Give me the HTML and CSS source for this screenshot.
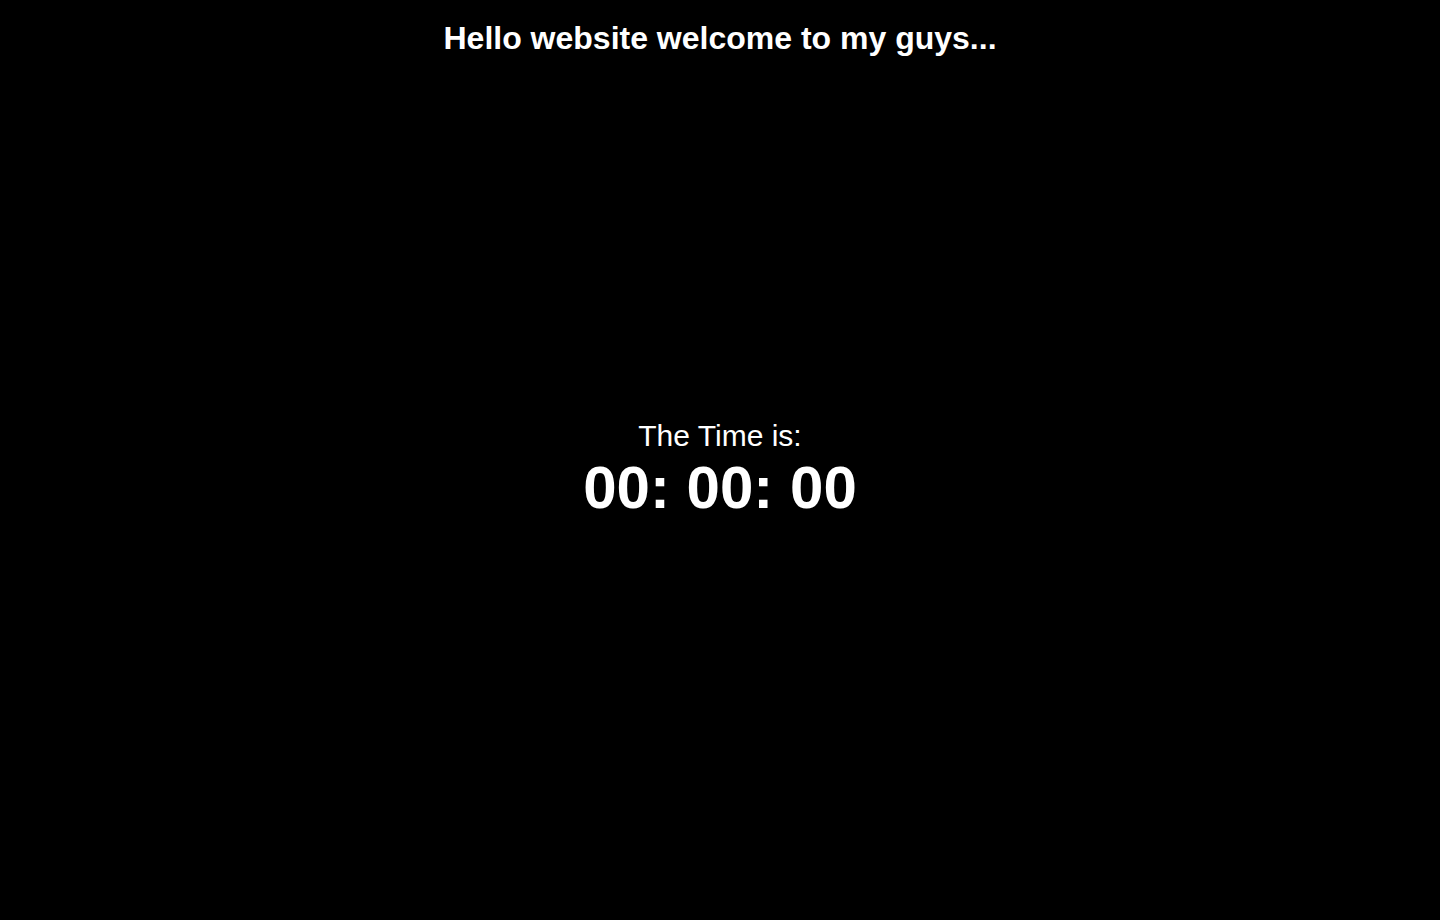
FILE: index.html
```html
<!DOCTYPE html>
<html lang="en">
<head>
<meta charset="utf-8">
<title>Clock</title>
<link rel="stylesheet" href="styles.css">
</head>
<body>
<div class="page">
  <h1 class="title">Hello website welcome to my guys...</h1>
  <main class="center">
    <div class="clock-box">
      <p class="label">The Time is:</p>
      <p class="clock">00: 00: 00</p>
    </div>
  </main>
</div>
</body>
</html>
```
FILE: styles.css
```css
html, body {
  margin: 0;
  padding: 0;
  background: #000;
  color: #fff;
  font-family: "Liberation Sans", Arial, sans-serif;
}
.page {
  height: 920px;
  display: flex;
  flex-direction: column;
}
.title {
  margin: 0;
  padding-top: 20px;
  text-align: center;
  font-size: 32px;
  font-weight: bold;
  line-height: 37px;
}
.center {
  flex: 1;
  display: flex;
  align-items: center;
  justify-content: center;
  padding-bottom: 38px;
}
.clock-box {
  text-align: center;
}
.label {
  margin: 0;
  font-size: 30px;
  line-height: 35px;
}
.clock {
  margin: 0;
  font-size: 60px;
  font-weight: bold;
  line-height: 69px;
}
```
